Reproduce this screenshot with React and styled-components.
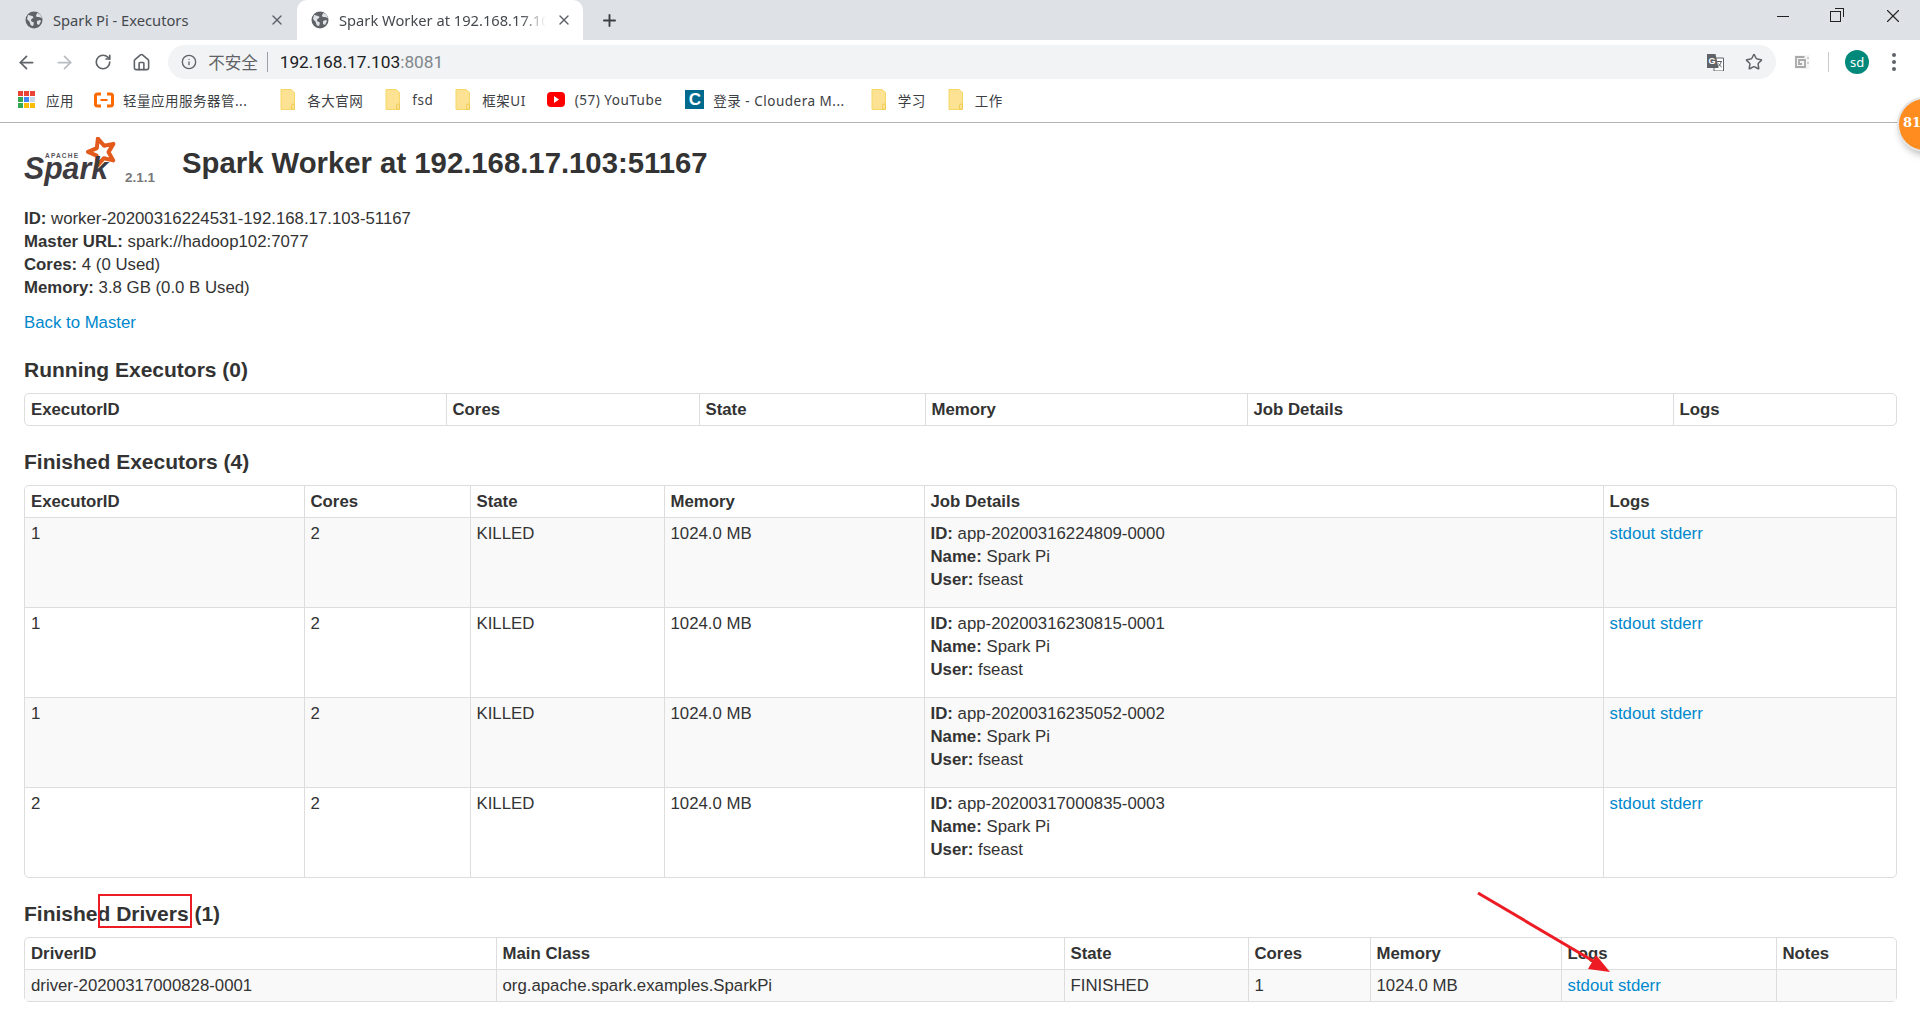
import React from 'react';
import styled, {createGlobalStyle} from 'styled-components';
import {ArrowLeft, ArrowRight, RotateCw, Home, Info, Star, X, Plus} from 'lucide-react';

const Global = createGlobalStyle`
  html, body {
    margin: 0;
    padding: 0;
    height: 1030px;
    overflow: hidden;
    background: #fff;
  }
`;

const BOOKMARKS = [
  {icon: 'apps', label: '应用', before: 0, inner: 11},
  {icon: 'ali', label: '轻量应用服务器管...', before: 20, inner: 9},
  {icon: 'folder', label: '各大官网', before: 33, inner: 12},
  {icon: 'folder', label: 'fsd', before: 22, inner: 12},
  {icon: 'folder', label: '框架UI', before: 22, inner: 12},
  {icon: 'yt', label: '(57) YouTube', before: 21, inner: 10},
  {icon: 'c', label: '登录 - Cloudera M...', before: 23, inner: 9},
  {icon: 'folder', label: '学习', before: 26, inner: 12},
  {icon: 'folder', label: '工作', before: 22, inner: 12},
];

const APP_COLORS = ['#ea4335', '#ea4335', '#ea4335', '#34a853', '#4285f4', '#c9d7e8', '#34a853', '#fbbc04', '#fbbc04'];

const EXECUTOR_RUNS = [
  {exec: '1', app: 'app-20200316224809-0000'},
  {exec: '1', app: 'app-20200316230815-0001'},
  {exec: '1', app: 'app-20200316235052-0002'},
  {exec: '2', app: 'app-20200317000835-0003'},
];

const RUNNING_COLS = [420.5, 253, 226, 322, 426, 223.5];
const FINISHED_COLS = [278.5, 166, 194, 260, 679, 293.5];
const DRIVER_COLS = [470.5, 568, 184, 122, 191, 215, 120.5];

const Globe = () => (
  <svg width="18" height="18" viewBox="0 0 18 18">
    <circle cx="9" cy="9" r="8.5" fill="#5f6368" />
    <path d="M3 4c2 0 3 1 4 1s2 1 1 2-2 1-2 2 1 2 2 2 1 2 0 4c-2 0-3-2-3-3S3 9 2 8zM12 2c0 1-1 2-1 3s2 1 3 1l3 1c0-2-3-5-5-5zM12 10l3-1 1 1-2 4-2-1z" fill="#dee1e6" />
  </svg>
);

const Folder = () => (
  <svg width="15" height="21" viewBox="0 0 15 21">
    <path d="M1 .5h10l3.5 3v17H1z" fill="#fde293" stroke="#f5d768" />
    <rect x="11.5" y="15" width="3" height="5.5" rx="1.5" fill="none" stroke="#eec94f" />
  </svg>
);

const BookmarkIcon = ({kind}) => {
  if (kind === 'apps') {
    return (
      <AppsGrid>
        {APP_COLORS.map((c, i) => (
          <AppDot key={i} $color={c} />
        ))}
      </AppsGrid>
    );
  }
  if (kind === 'ali') {
    return (
      <svg width="20" height="16" viewBox="0 0 20 16">
        <path d="M7 2H3.5Q1.5 2 1.5 4v8q0 2 2 2H7M13 2h3.5q2 0 2 2v8q0 2-2 2H13" fill="none" stroke="#ff6a00" strokeWidth="3" />
        <rect x="6.5" y="7" width="7" height="2" fill="#ff6a00" />
      </svg>
    );
  }
  if (kind === 'yt') {
    return (
      <svg width="18" height="15" viewBox="0 0 18 15">
        <rect width="18" height="15" rx="4" fill="#f00" />
        <path d="M7 4l5 3.5L7 11z" fill="#fff" />
      </svg>
    );
  }
  if (kind === 'c') {
    return <CBadge>C</CBadge>;
  }
  return <Folder />;
};

const TranslateIcon = () => (
  <svg width="18" height="18" viewBox="0 0 18 18">
    <path d="M8 5h9.5v13H8z" fill="#fff" stroke="#5f6368" />
    <path d="M1 1h8.5l3 14H1z" fill="#5f6368" />
    <text x="2.5" y="10.5" fontSize="9" fontWeight="700" fontFamily="Liberation Sans, sans-serif" fill="#fff">G</text>
    <path d="M11 8.5h5M13.5 8v1M15 9c-.5 2.500-2 4-3.500 5M12.500 10.500c.8 1.500 2 2.800 3.200 3.500" fill="none" stroke="#5f6368" strokeWidth="1" />
  </svg>
);

const ExtensionIcon = () => (
  <svg width="16" height="16" viewBox="0 0 16 16">
    <rect x=".5" y="1" width="15" height="14" fill="#f5f5f5" />
    <path d="M10.500 3H2v10h9V6H5v4h3" fill="none" stroke="#a9a9a9" strokeWidth="1.800" />
    <path d="M14 3v2M14 8v2" stroke="#c4c4c4" strokeWidth="1.500" />
  </svg>
);

const starPoints = (cx, cy, outer, inner, rot) => {
  const pts = [];
  for (let i = 0; i < 10; i += 1) {
    const r = i % 2 === 0 ? outer : inner;
    const a = rot + (i * Math.PI) / 5;
    pts.push(`${(cx + r * Math.sin(a)).toFixed(1)},${(cy - r * Math.cos(a)).toFixed(1)}`);
  }
  return pts.join(' ');
};

const SparkLogo = () => (
  <svg width="96" height="52" viewBox="0 0 96 52">
    <polygon points={starPoints(78, 15, 14, 6.5, -0.3)} fill="none" stroke="#e25a1c" strokeWidth="4" strokeLinejoin="round" />
    <text x="21" y="21" fontSize="6.5" fontWeight="700" letterSpacing="1.2" fontFamily="Liberation Sans, sans-serif" fill="#55535a">APACHE</text>
    <text x="0" y="42" fontSize="32" fontWeight="700" fontStyle="italic" textLength="84" lengthAdjust="spacingAndGlyphs" fontFamily="Liberation Sans, sans-serif" fill="#3d3b3f">Spark</text>
  </svg>
);

const DataTable = ({cols, head, children}) => (
  <Table>
    <colgroup>
      {cols.map((w, i) => (
        <Col key={i} $w={w} />
      ))}
    </colgroup>
    <thead>
      <tr>
        {head.map((h) => (
          <Th key={h}>{h}</Th>
        ))}
      </tr>
    </thead>
    {children && <tbody>{children}</tbody>}
  </Table>
);

const LogLinks = () => (
  <>
    <Link href="#">stdout</Link> <Link href="#">stderr</Link>
  </>
);

const App = () => {
  return (
    <>
      <Global />
      <Browser>
        <TabStrip>
          <Tab>
            <Globe />
            <TabTitle>Spark Pi - Executors</TabTitle>
            <TabClose size={16} strokeWidth={2} />
          </Tab>
          <Tab $active>
            <Globe />
            <TabTitle $fade>Spark Worker at 192.168.17.103:51167</TabTitle>
            <TabClose size={16} strokeWidth={2} />
          </Tab>
          <NewTab size={19} strokeWidth={2.4} />
          <WindowControls>
            <WinMin />
            <WinRestore />
            <WinClose size={22} strokeWidth={1.2} />
          </WindowControls>
        </TabStrip>

        <Toolbar>
          <NavButton><ArrowLeft size={21} strokeWidth={2} /></NavButton>
          <NavButton $disabled><ArrowRight size={21} strokeWidth={2} /></NavButton>
          <NavButton><RotateCw size={18} strokeWidth={2.2} /></NavButton>
          <NavButton><Home size={19} strokeWidth={2} /></NavButton>
          <Omnibox>
            <Info size={16} strokeWidth={2} color="#5f6368" />
            <Insecure>不安全</Insecure>
            <UrlDivider />
            <Url>192.168.17.103<UrlPort>:8081</UrlPort></Url>
            <OmniActions>
              <TranslateIcon />
              <Star size={18} strokeWidth={2} color="#5f6368" />
            </OmniActions>
          </Omnibox>
          <ToolbarEnd>
            <ExtensionIcon />
            <ToolDivider />
            <Avatar>sd</Avatar>
            <Kebab>
              <KebabDot />
              <KebabDot />
              <KebabDot />
            </Kebab>
          </ToolbarEnd>
        </Toolbar>

        <BookmarksBar>
          {BOOKMARKS.map((b) => (
            <Bookmark key={b.label} $before={b.before} $inner={b.inner}>
              <BookmarkIcon kind={b.icon} />
              <span>{b.label}</span>
            </Bookmark>
          ))}
        </BookmarksBar>
      </Browser>

      <FloatBadge>81</FloatBadge>

      <Page>
        <TitleRow>
          <LogoBox>
            <SparkLogo />
            <Version>2.1.1</Version>
          </LogoBox>
          <Title>Spark Worker at 192.168.17.103:51167</Title>
        </TitleRow>

        <InfoList>
          <li><b>ID:</b> worker-20200316224531-192.168.17.103-51167</li>
          <li><b>Master URL:</b> spark://hadoop102:7077</li>
          <li><b>Cores:</b> 4 (0 Used)</li>
          <li><b>Memory:</b> 3.8 GB (0.0 B Used)</li>
        </InfoList>
        <div><Link href="#">Back to Master</Link></div>

        <SectionTitle>Running Executors (0)</SectionTitle>
        <DataTable cols={RUNNING_COLS} head={['ExecutorID', 'Cores', 'State', 'Memory', 'Job Details', 'Logs']} />

        <SectionTitle>Finished Executors (4)</SectionTitle>
        <DataTable cols={FINISHED_COLS} head={['ExecutorID', 'Cores', 'State', 'Memory', 'Job Details', 'Logs']}>
          {EXECUTOR_RUNS.map((r) => (
            <Row key={r.app}>
              <Td>{r.exec}</Td>
              <Td>2</Td>
              <Td>KILLED</Td>
              <Td>1024.0 MB</Td>
              <Td>
                <JobDetails>
                  <li><b>ID:</b> {r.app}</li>
                  <li><b>Name:</b> Spark Pi</li>
                  <li><b>User:</b> fseast</li>
                </JobDetails>
              </Td>
              <Td><LogLinks /></Td>
            </Row>
          ))}
        </DataTable>

        <SectionTitle>Finished Drivers (1)</SectionTitle>
        <DataTable cols={DRIVER_COLS} head={['DriverID', 'Main Class', 'State', 'Cores', 'Memory', 'Logs', 'Notes']}>
          <Row>
            <Td>driver-20200317000828-0001</Td>
            <Td>org.apache.spark.examples.SparkPi</Td>
            <Td>FINISHED</Td>
            <Td>1</Td>
            <Td>1024.0 MB</Td>
            <Td><LogLinks /></Td>
            <Td />
          </Row>
        </DataTable>
      </Page>

      <RedBox />
      <RedArrow width="150" height="90" viewBox="0 0 150 90">
        <line x1="2" y1="2" x2="124" y2="74" stroke="#ed1c24" strokeWidth="3" />
        <polygon points="134,81 112,78 120,64" fill="#ed1c24" />
      </RedArrow>
    </>
  );
};

export default App;

const Browser = styled.div`
  height: 123px;
  box-sizing: border-box;
  border-bottom: 1px solid #b3b3b3;
  font-family: 'Noto Sans', 'Noto Sans CJK SC', sans-serif;
`;

const TabStrip = styled.div`
  height: 40px;
  background-color: #dee1e6;
  display: flex;
  align-items: center;
  padding-left: 25px;
`;

const Tab = styled.div`
  height: 40px;
  box-sizing: border-box;
  display: flex;
  align-items: center;
  gap: 10px;
  color: #45494e;
  font-size: 14.700px;
  width: ${(p) => (p.$active ? '286px' : '272px')};
  padding: ${(p) => (p.$active ? '0 11px 0 14px' : '0 12px 0 0')};
  background-color: ${(p) => (p.$active ? '#fff' : 'transparent')};
  border-radius: ${(p) => (p.$active ? '10px 10px 0 0' : '0')};
`;

const TabTitle = styled.span`
  flex: 1;
  overflow: hidden;
  white-space: nowrap;
  ${(p) => p.$fade && `
    -webkit-mask-image: linear-gradient(to right, #000 88%, transparent 100%);
    mask-image: linear-gradient(to right, #000 88%, transparent 100%);
  `}
`;

const TabClose = styled(X)`
  color: #5f6368;
  flex: none;
`;

const NewTab = styled(Plus)`
  color: #3c4043;
  margin-left: 17px;
`;

const WindowControls = styled.div`
  margin-left: auto;
  width: 127px;
  height: 32px;
  margin-top: -8px;
  display: flex;
  align-items: center;
  justify-content: space-between;
  padding-right: 16px;
  box-sizing: content-box;
`;

const WinMin = styled.div`
  width: 12px;
  height: 1px;
  background-color: #222;
`;

const WinRestore = styled.div`
  width: 9px;
  height: 9px;
  border: 1px solid #222;
  position: relative;
  &::after {
    content: '';
    position: absolute;
    top: -4px;
    right: -4px;
    width: 8px;
    height: 8px;
    border-top: 1px solid #222;
    border-right: 1px solid #222;
  }
`;

const WinClose = styled(X)`
  color: #222;
`;

const Toolbar = styled.div`
  height: 39px;
  display: flex;
  align-items: center;
  padding: 5px 0 0 7px;
  box-sizing: border-box;
  color: #5f6368;
`;

const NavButton = styled.div`
  width: 38.300px;
  height: 34px;
  flex: none;
  display: flex;
  align-items: center;
  justify-content: center;
  color: ${(p) => (p.$disabled ? '#b9bcc0' : '#5f6368')};
`;

const Omnibox = styled.div`
  width: 1608px;
  height: 34px;
  margin-left: 8px;
  flex: none;
  box-sizing: border-box;
  display: flex;
  align-items: center;
  padding: 0 13px;
  background-color: #f1f3f4;
  border-radius: 17px;
`;

const Insecure = styled.span`
  margin-left: 11px;
  font-size: 16.500px;
  color: #5f6368;
`;

const UrlDivider = styled.div`
  width: 1px;
  height: 20px;
  margin: 0 12px 0 9px;
  background-color: #9aa0a6;
`;

const Url = styled.span`
  font-family: Roboto, 'Noto Sans', sans-serif;
  font-size: 17.300px;
  color: #202124;
`;

const UrlPort = styled.span`
  color: #80868b;
`;

const OmniActions = styled.div`
  margin-left: auto;
  display: flex;
  align-items: center;
  gap: 21px;
`;

const ToolbarEnd = styled.div`
  flex: 1;
  display: flex;
  align-items: center;
  padding-left: 18px;
`;

const ToolDivider = styled.div`
  width: 1px;
  height: 20px;
  margin: 0 16px 0 18px;
  background-color: #c8cacd;
`;

const Avatar = styled.div`
  width: 24px;
  height: 24px;
  border-radius: 50%;
  background-color: #00897b;
  color: #fff;
  font-size: 13px;
  line-height: 24px;
  text-align: center;
`;

const Kebab = styled.div`
  margin-left: 23px;
  display: flex;
  flex-direction: column;
  gap: 3px;
`;

const KebabDot = styled.div`
  width: 4px;
  height: 4px;
  border-radius: 50%;
  background-color: #5f6368;
`;

const BookmarksBar = styled.div`
  height: 41px;
  display: flex;
  align-items: center;
  padding-left: 18px;
  font-size: 13.500px;
  letter-spacing: 0.5px;
  color: #3c4043;
`;

const Bookmark = styled.div`
  display: flex;
  align-items: center;
  gap: ${(p) => p.$inner}px;
  margin-left: ${(p) => p.$before}px;
  white-space: nowrap;
`;

const AppsGrid = styled.div`
  display: grid;
  grid-template-columns: repeat(3, 5px);
  grid-auto-rows: 5px;
  gap: 1px;
`;

const AppDot = styled.div`
  background-color: ${(p) => p.$color};
`;

const CBadge = styled.div`
  width: 19px;
  height: 19px;
  background-color: #006a8e;
  color: #fff;
  font: 700 17px/19px 'Liberation Sans', sans-serif;
  letter-spacing: 0;
  text-align: center;
`;

const FloatBadge = styled.div`
  position: absolute;
  left: 1899px;
  top: 99px;
  width: 51px;
  height: 51px;
  box-sizing: border-box;
  border-radius: 50%;
  background-color: #ff8c1f;
  box-shadow: 0 0 0 2px #e4e4e4, 2px 4px 8px rgba(0, 0, 0, 0.35);
  color: #fff;
  font: 700 13px/48px 'DejaVu Serif', serif;
  padding-left: 4px;
`;

const Page = styled.div`
  padding: 0 23px 0 24px;
  font-family: 'Liberation Sans', Arial, sans-serif;
  font-size: 16.800px;
  line-height: 23px;
  color: #333;
`;

const TitleRow = styled.div`
  display: flex;
  align-items: flex-start;
  height: 84px;
  padding-top: 14px;
  box-sizing: border-box;
`;

const LogoBox = styled.div`
  width: 158px;
  flex: none;
  display: flex;
  align-items: flex-end;
  height: 52px;
`;

const Version = styled.span`
  font-size: 13.500px;
  font-weight: 700;
  color: #777;
  margin: 0 0 2px 5px;
  line-height: 18px;
`;

const Title = styled.h3`
  margin: 9px 0 0;
  font-size: 29.300px;
  line-height: 34px;
  font-weight: 700;
  color: #333;
`;

const InfoList = styled.ul`
  list-style: none;
  margin: 0 0 12px;
  padding: 0;
`;

const Link = styled.a`
  color: #0088cc;
  text-decoration: none;
`;

const SectionTitle = styled.h4`
  margin: 23px 0 11px;
  font-size: 21px;
  line-height: 25px;
  font-weight: 700;
  color: #333;
`;

const Table = styled.table`
  width: 1873px;
  table-layout: fixed;
  border-collapse: separate;
  border-spacing: 0;
  border: 1px solid #ddd;
  border-radius: 5px;
  margin: 0;
`;

const Col = styled.col`
  width: ${(p) => p.$w}px;
`;

const Th = styled.th`
  padding: 4px 6px;
  text-align: left;
  vertical-align: top;
  font-weight: 700;
  border-left: 1px solid #ddd;
  &:first-child {
    border-left: 0;
  }
`;

const Td = styled.td`
  padding: 4px 6px;
  vertical-align: top;
  border-top: 1px solid #ddd;
  border-left: 1px solid #ddd;
  &:first-child {
    border-left: 0;
  }
`;

const Row = styled.tr`
  &:nth-child(odd) > td {
    background-color: #f9f9f9;
  }
`;

const JobDetails = styled.ul`
  list-style: none;
  margin: 0 0 12px;
  padding: 0;
`;

const RedBox = styled.div`
  position: absolute;
  left: 98px;
  top: 894px;
  width: 94px;
  height: 34px;
  box-sizing: border-box;
  border: 2px solid #ed1c24;
`;

const RedArrow = styled.svg`
  position: absolute;
  left: 1476px;
  top: 891px;
`;
